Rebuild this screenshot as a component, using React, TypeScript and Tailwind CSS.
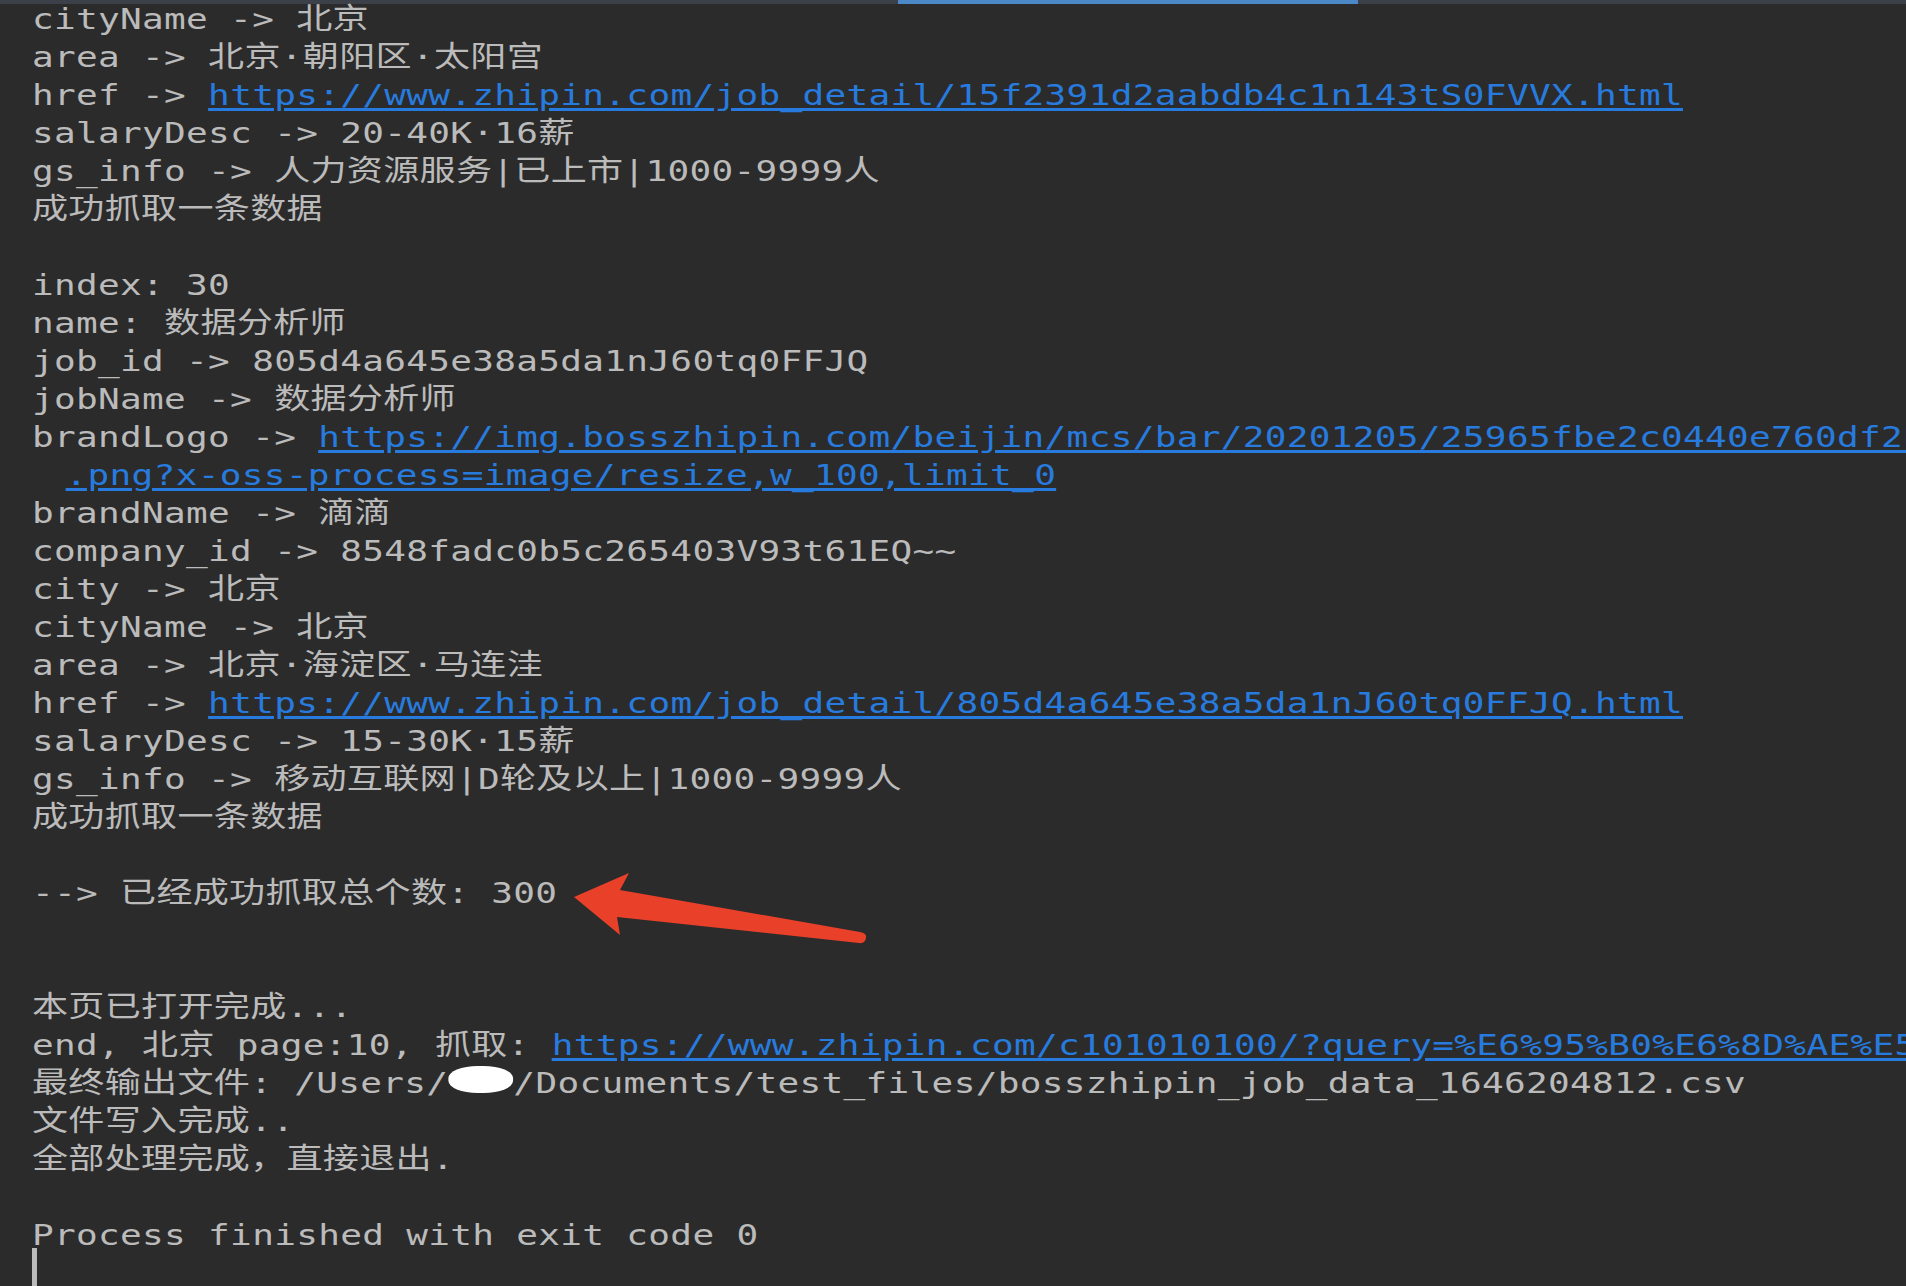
import React from "react";

type Part = string | { link: string } | { blob: true };

interface Line {
    parts: Part[];
    indent?: boolean;
}

const L = (...parts: Part[]): Line => ({ parts });

const lines: Line[] = [
    L("cityName -> 北京"),
    L("area -> 北京·朝阳区·太阳宫"),
    L("href -> ", { link: "https://www.zhipin.com/job_detail/15f2391d2aabdb4c1n143tS0FVVX.html" }),
    L("salaryDesc -> 20-40K·16薪"),
    L("gs_info -> 人力资源服务|已上市|1000-9999人"),
    L("成功抓取一条数据"),
    L(""),
    L("index: 30"),
    L("name: 数据分析师"),
    L("job_id -> 805d4a645e38a5da1nJ60tq0FFJQ"),
    L("jobName -> 数据分析师"),
    L("brandLogo -> ", { link: "https://img.bosszhipin.com/beijin/mcs/bar/20201205/25965fbe2c0440e760df2bf6a4d0e4b4cv1" }),
    { parts: [{ link: ".png?x-oss-process=image/resize,w_100,limit_0" }], indent: true },
    L("brandName -> 滴滴"),
    L("company_id -> 8548fadc0b5c265403V93t61EQ~~"),
    L("city -> 北京"),
    L("cityName -> 北京"),
    L("area -> 北京·海淀区·马连洼"),
    L("href -> ", { link: "https://www.zhipin.com/job_detail/805d4a645e38a5da1nJ60tq0FFJQ.html" }),
    L("salaryDesc -> 15-30K·15薪"),
    L("gs_info -> 移动互联网|D轮及以上|1000-9999人"),
    L("成功抓取一条数据"),
    L(""),
    L("--> 已经成功抓取总个数: 300"),
    L(""),
    L(""),
    L("本页已打开完成..."),
    L("end, 北京 page:10, 抓取: ", { link: "https://www.zhipin.com/c101010100/?query=%E6%95%B0%E6%8D%AE%E5%88%86%E6%9E%90%E5%B8%88&city=101010100&page=10" }),
    L("最终输出文件: /Users/", { blob: true }, "/Documents/test_files/bosszhipin_job_data_1646204812.csv"),
    L("文件写入完成.."),
    L("全部处理完成，直接退出."),
    L(""),
    L("Process finished with exit code 0"),
];

function ConsoleLine({ line }: { line: Line }) {
    return (
        <div className={"h-[38px] leading-[38px] whitespace-pre " + (line.indent ? "pl-[27px]" : "")}>
            {line.parts.map((p, i) => {
                if (typeof p === "string") return <span key={i}>{p}</span>;
                if ("link" in p)
                    return (
                        <span key={i} className="text-[#287bde] underline decoration-[3px] underline-offset-[3px]">
                            {p.link}
                        </span>
                    );
                return <span key={i} className="inline-block w-[3ch] h-[27px] bg-white rounded-[45%]" />;
            })}
        </div>
    );
}

export default function App() {
    return (
        <div className="relative w-[1906px] h-[1286px] overflow-hidden bg-[#2b2b2b]">
            {/* top tab strip */}
            <div className="flex h-1 bg-[#3c4049]">
                <div className="w-[898px]" />
                <div className="w-[460px] bg-[#4a88c7]" />
            </div>

            {/* run console output */}
            <div className="-mt-1 pl-[32px]">
                <div className="origin-top-left scale-x-[1.243] font-['DejaVu_Sans_Mono','Noto_Sans_CJK_SC',monospace] text-[29px] tracking-[0.25px] text-[#bbbbbb]">
                    {lines.map((line, i) => (
                        <ConsoleLine key={i} line={line} />
                    ))}
                    <div className="-mt-[6px] h-[40px] w-[4px] bg-[#bbbbbb]" />
                </div>
            </div>

            {/* red annotation arrow */}
            <svg className="absolute left-[560px] top-[860px]" width="320" height="100" viewBox="0 0 320 100">
                <path
                    d="M14 37 L69 13 L60 30 L300 72 Q307 73 306 78 Q305 84 299 83 L57 57 L60 75 Z"
                    fill="#e9402a"
                />
            </svg>
        </div>
    );
}
